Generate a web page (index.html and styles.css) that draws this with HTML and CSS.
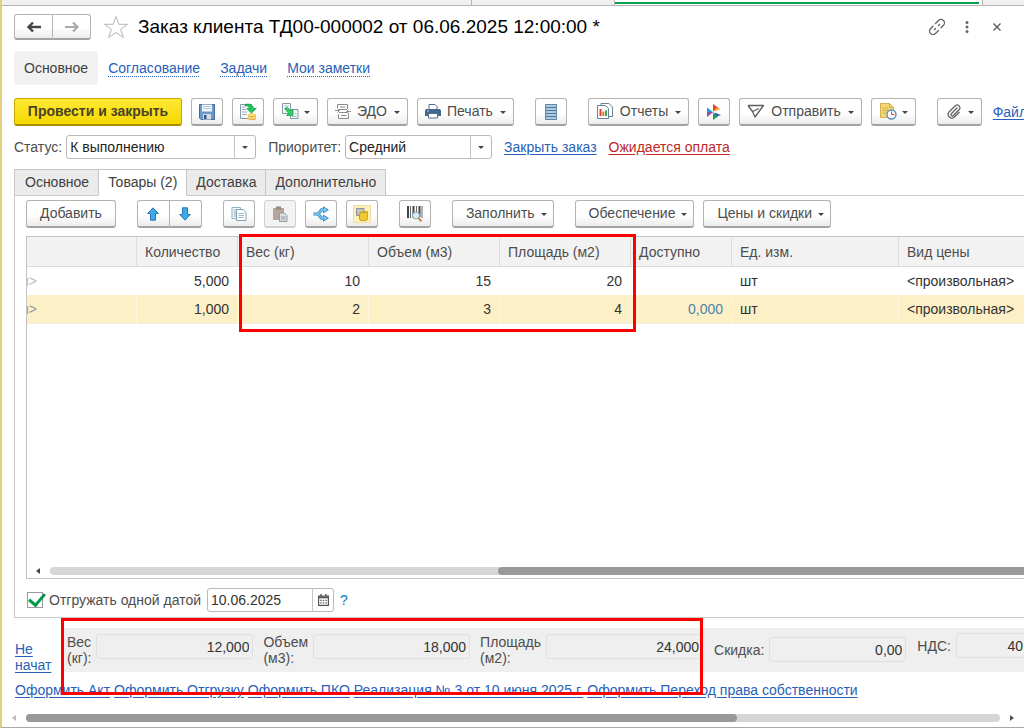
FILE: index.html
```html
<!DOCTYPE html>
<html lang="ru">
<head>
    <meta charset="UTF-8">
    <meta name="viewport" content="width=device-width, initial-scale=1.0">
    <title>Заказ клиента ТД00-000002</title>
    <link rel="stylesheet" href="styles.css">
</head>
<body>
<div class="window-tabs">
    <div class="window-tab"></div>
    <div class="window-tab"></div>
    <div class="window-tab active"></div>
    <div class="window-tab"></div>
</div>

<header class="header">
    <div class="btn-pair history">
        <button type="button" class="btn" aria-label="Назад">
            <svg width="16" height="12" viewBox="0 0 16 12"><path d="M15 6H3M7 1.5L2.500 6L7 10.500" fill="none" stroke="#444" stroke-width="2.400"/></svg>
        </button>
        <button type="button" class="btn" aria-label="Вперед">
            <svg width="16" height="12" viewBox="0 0 16 12"><path d="M1 6H13M9 1.500L13.500 6L9 10.500" fill="none" stroke="#aaa" stroke-width="2.200"/></svg>
        </button>
    </div>
    <svg class="star" width="26" height="24" viewBox="0 0 26 24"><path d="M13 1.500L15.800 9.300H24.500L17.600 14.300L20.300 22.500L13 17.500L5.700 22.500L8.400 14.300L1.500 9.300H10.200Z" fill="#fff" stroke="#b3b6bb"/></svg>
    <h1>Заказ клиента ТД00-000002 от 06.06.2025 12:00:00 *</h1>
    <div class="header-tools">
        <svg width="18" height="18" viewBox="0 0 18 18"><g fill="none" stroke="#6a6a6a" stroke-width="1.400" stroke-linecap="round"><path d="M7.500 5.500L10.500 2.500A3.300 3.300 0 0 1 15.500 7.300L13 9.800"/><path d="M10.500 12.500L7.500 15.500A3.300 3.300 0 0 1 2.500 10.700L5 8.200"/><path d="M6.500 11.500L7.500 10.500M10.500 7.500L11.500 6.500"/></g></svg>
        <svg width="18" height="14" viewBox="0 0 18 14"><g fill="#666"><circle cx="9" cy="2.500" r="1.500"/><circle cx="9" cy="7" r="1.500"/><circle cx="9" cy="11.500" r="1.500"/></g></svg>
        <svg width="18" height="8" viewBox="0 0 18 8"><path d="M5.500.5L12.500 7.500M12.500.5L5.500 7.500" stroke="#555" stroke-width="1.300"/></svg>
    </div>
</header>

<nav class="sections">
    <a href="#" class="current">Основное</a>
    <a href="#">Согласование</a>
    <a href="#">Задачи</a>
    <a href="#">Мои заметки</a>
</nav>

<div class="toolbar main-toolbar">
    <button type="button" class="btn primary">Провести и закрыть</button>
    <button type="button" class="btn icon-btn" aria-label="Записать">
        <svg width="16" height="16" viewBox="0 0 16 16"><path d="M.5.5H15.500V15.500H2L.5 14Z" fill="#6b98cb" stroke="#41699b"/><path d="M3 .5H13V7.500H3Z" fill="#f2f6fa"/><path d="M4 2.500H12M4 4.500H12" stroke="#b9c8d8"/><path d="M4 10H12V15.500H4Z" fill="#d5dbe2"/><path d="M5 11H7.500V15H5Z" fill="#33557f"/></svg>
    </button>
    <button type="button" class="btn icon-btn" aria-label="Провести">
        <svg width="18" height="18" viewBox="0 0 18 18"><path d="M1.500 1.500H12.500V15.500H1.500Z" fill="#f5f8fa" stroke="#8499a8"/><path d="M3 4H6M3 6.500H7M3 9H8M3 11.500H8" stroke="#9fb0bb"/><path d="M9 11.500V15.500A4 1.700 0 0 0 17 15.500V11.500Z" fill="#e6b63a"/><ellipse cx="13" cy="11.500" rx="4" ry="1.600" fill="#f8dc7c"/><path d="M9 13.500A4 1.600 0 0 0 17 13.500" fill="none" stroke="#fff0b5"/><path d="M6 1.500C11 .3 14 2 14.500 5.500H17.300L12.500 10L7.800 5.500H10.500C10 3.500 8.500 2.500 6 2.800Z" fill="#23c35b" stroke="#13934a" stroke-width=".7"/></svg>
    </button>
    <button type="button" class="btn menu-btn menu-icon" aria-label="Создать на основании">
        <svg width="18" height="18" viewBox="0 0 18 18"><path d="M1.500 1.500H9.500V11.500H1.500Z" fill="#f7fafb" stroke="#8499a8"/><path d="M3 4H8M3 6.500H8" stroke="#a8b7c0"/><path d="M9.500 7.500H17V16.500H9.500Z" fill="#f7fafb" stroke="#8499a8"/><path d="M13.500 12H15.500M11 14.500H15.500" stroke="#a8b7c0"/><path d="M4.500 6L6.500 5.500L10 9L12 7V13.500H5.500L7.800 11.200L4.500 8Z" fill="#2fd06a" stroke="#13934a" stroke-width=".7"/></svg>
        <span class="caret"></span>
    </button>
    <button type="button" class="btn menu-btn">
        <svg width="16" height="18" viewBox="0 0 16 18"><g fill="none" stroke="#8d8d8d"><path d="M2.500 6V2.500H12.500V7M3.500 12V16.500H13.500V11"/><path d="M5 5H10.500M4 7.500H12M4 10.500H12M6 13.500H11.500"/><path d="M0 8.500H4M2.500 6.500L4.500 8.500L2.500 10.500M16 9.500H12M13.500 7.500L11.500 9.500L13.500 11.500"/></g></svg>
        ЭДО<span class="caret"></span>
    </button>
    <button type="button" class="btn menu-btn">
        <svg width="16" height="16" viewBox="0 0 16 16"><path d="M4 1.500H10L12 3.500V7H4Z" fill="#fff" stroke="#53718c"/><path d="M1 6H15L16 7.500V13H0V7.500Z" fill="#3f698f"/><path d="M3.500 10.500H12.500V15H3.500Z" fill="#fff" stroke="#53718c"/><path d="M2 8H4" stroke="#bcd6e8"/></svg>
        Печать<span class="caret"></span>
    </button>
    <button type="button" class="btn icon-btn group-start" aria-label="Список">
        <svg width="12" height="16" viewBox="0 0 12 16"><path d="M.5.5H11.500V15.500H.5Z" fill="#a8c9e0" stroke="#5d87a6"/><path d="M1 3.500H11M1 6.500H11M1 9.500H11M1 12.500H11" stroke="#4f7ea1"/></svg>
    </button>
    <button type="button" class="btn menu-btn group-start">
        <svg width="18" height="18" viewBox="0 0 18 18"><path d="M5 3V1.500H13L16.500 5V14.500H13" fill="#fff" stroke="#688298"/><path d="M1.500 3.500H9.500L12.500 6.500V16.500H1.500Z" fill="#fff" stroke="#688298"/><path d="M4.500 14V7" stroke="#d9402f" stroke-width="2"/><path d="M7.300 14V9.500" stroke="#dd7a35" stroke-width="2"/><path d="M10 14V8.500" stroke="#37a653" stroke-width="2"/></svg>
        Отчеты<span class="caret"></span>
    </button>
    <button type="button" class="btn icon-btn" aria-label="Сервис">
        <svg width="16" height="18" viewBox="0 0 16 18"><path d="M7 1L12 4.500L7 8.500Z" fill="#ee3d2b"/><path d="M8 8.500L10.500 4.500L15 6Z" fill="#f7a325"/><path d="M1 4.500L7 9L1 9Z" fill="#1d9fd8"/><path d="M1 9H7.500L1 14Z" fill="#8d51a5"/><path d="M7 9.500L12 13.500L7 17Z" fill="#25a056"/><path d="M8 9.500L15 12L10.500 13.500Z" fill="#1a5fa8"/></svg>
    </button>
    <button type="button" class="btn menu-btn">
        <svg width="18" height="16" viewBox="0 0 18 16"><path d="M1 2.500H16.500L8 14L5.500 8.500L1 2.500M5.500 8.500L12 5.500" fill="none" stroke="#5c5c5c" stroke-width="1.300" stroke-linejoin="round"/></svg>
        Отправить<span class="caret"></span>
    </button>
    <button type="button" class="btn menu-btn menu-icon" aria-label="Напоминания">
        <svg width="18" height="18" viewBox="0 0 18 18"><path d="M1.500 1.500H10.500L14.500 5.500V15.500H1.500Z" fill="#f3d676" stroke="#d3b050"/><path d="M10.500 1.500V5.500H14.500M3.500 6H9M3.500 8.500H9M3.500 11H7" fill="none" stroke="#d3b050"/><circle cx="12.500" cy="12.500" r="4.500" fill="#fff" stroke="#5b8fbc" stroke-width="1.400"/><path d="M12.500 9.500V12.500H15.500" fill="none" stroke="#d44"/></svg>
        <span class="caret"></span>
    </button>
    <button type="button" class="btn menu-btn menu-icon group-start" aria-label="Присоединенные файлы">
        <svg width="18" height="16" viewBox="0 0 18 16"><path d="M12.500 4.500L6.500 10.500A1.400 1.400 0 0 0 8.500 12.500L14.300 6.500A2.800 2.800 0 0 0 10.500 2.500L4 9A3.700 3.700 0 0 0 9.200 14.200L14.500 9" fill="none" stroke="#666" stroke-width="1.300"/></svg>
        <span class="caret"></span>
    </button>
    <a href="#" class="files-link">Файл</a>
</div>

<div class="status-row">
    <label for="status">Статус:</label>
    <div class="combo combo-status">
        <select id="status"><option>К выполнению</option></select>
    </div>
    <label for="priority">Приоритет:</label>
    <div class="combo combo-priority">
        <select id="priority"><option>Средний</option></select>
    </div>
    <a href="#">Закрыть заказ</a>
    <a href="#" class="warning-link">Ожидается оплата</a>
</div>

<div class="tabs" role="tablist">
    <button type="button" class="tab" role="tab">Основное</button>
    <button type="button" class="tab active" role="tab" aria-selected="true">Товары (2)</button>
    <button type="button" class="tab" role="tab">Доставка</button>
    <button type="button" class="tab" role="tab">Дополнительно</button>
</div>

<main class="panel">
    <div class="toolbar">
        <button type="button" class="btn text-btn">Добавить</button>
        <div class="btn-pair group-start">
            <button type="button" class="btn" aria-label="Переместить вверх">
                <svg width="12" height="14" viewBox="0 0 12 14"><path d="M6 .8L11.300 6.500H8.500V13.200H3.500V6.500H.7Z" fill="#3fa9ea" stroke="#2478b3"/></svg>
            </button>
            <button type="button" class="btn" aria-label="Переместить вниз">
                <svg width="12" height="14" viewBox="0 0 12 14"><path d="M6 13.200L11.300 7.500H8.500V.8H3.500V7.500H.7Z" fill="#3fa9ea" stroke="#2478b3"/></svg>
            </button>
        </div>
        <button type="button" class="btn icon-btn group-start" aria-label="Скопировать">
            <svg width="16" height="16" viewBox="0 0 16 16"><path d="M1 1.500H9.500V12.500H1Z" fill="#f4f9fc" stroke="#8fb0c4"/><path d="M2.500 4H5M2.500 6H5M2.500 8H5M2.500 10H5" stroke="#8fb0c4"/><path d="M5.500 3.500H12L15 6.500V14.500H5.500Z" fill="#fff" stroke="#7fa3b9"/><path d="M7.500 7.500H13M7.500 9.500H13M7.500 11.500H13" stroke="#9dbccd"/></svg>
        </button>
        <button type="button" class="btn icon-btn" aria-label="Вставить" disabled>
            <svg width="16" height="16" viewBox="0 0 16 16"><path d="M1 2H12V14H1Z" fill="#b7a49b"/><path d="M4 .5H9V3.500H4Z" fill="#8e8782"/><path d="M7.500 7H12.500L15 9.500V15.500H7.500Z" fill="#d9dee2" stroke="#929ba3"/><path d="M9 11H13.500M9 13H13.500" stroke="#929ba3"/></svg>
        </button>
        <button type="button" class="btn icon-btn" aria-label="Разбить строку">
            <svg width="16" height="16" viewBox="0 0 16 16"><path d="M.5 8H5L8.500 3.800H11.500M5 8L8.500 12.200H11.500" fill="none" stroke="#2f88bd" stroke-width="3"/><path d="M10.500 .8L15.300 3.800L10.500 6.800ZM10.500 9.200L15.300 12.200L10.500 15.200Z" fill="#7cc8f2" stroke="#2f88bd" stroke-width=".9"/><path d="M1 8H5L8.500 3.800H12M5 8L8.500 12.200H12" fill="none" stroke="#7cc8f2" stroke-width="1.400"/></svg>
        </button>
        <button type="button" class="btn icon-btn" aria-label="Подбор">
            <svg width="18" height="18" viewBox="0 0 18 18"><path d="M.5.5H17.500V17.500H.5Z" fill="#fff0ba" stroke="#f2dda0"/><path d="M3.500 3.500H11V10.500H3.500Z" fill="#bfc4c7" stroke="#8b9196"/><rect x="6.500" y="7.500" width="8" height="8" rx="2" fill="#f4c92d" stroke="#c29a1c"/><path d="M7 10V8.500L9 6.500H14.500V13" fill="none" stroke="#d6ab20"/></svg>
        </button>
        <button type="button" class="btn icon-btn group-start" aria-label="Поиск по штрихкоду">
            <svg width="16" height="16" viewBox="0 0 16 16"><path d="M1 0V12M6.500 0V12M12.500 0V11" stroke="#444" stroke-width="2"/><path d="M3.500 0V12M9.500 0V12M15 0V12" stroke="#666"/><circle cx="9" cy="9.500" r="3.500" fill="#dcecf7" stroke="#8aa7bb"/><path d="M11.500 12L14.500 15.500" stroke="#c58a5a" stroke-width="2"/></svg>
        </button>
        <button type="button" class="btn text-btn group-start">Заполнить<span class="caret"></span></button>
        <button type="button" class="btn text-btn group-start">Обеспечение<span class="caret"></span></button>
        <button type="button" class="btn text-btn">Цены и скидки<span class="caret"></span></button>
    </div>

    <div class="grid">
        <div class="grid-view">
            <table>
                <colgroup>
                    <col class="col-name">
                    <col class="col-qty">
                    <col class="col-measure">
                    <col class="col-measure">
                    <col class="col-measure">
                    <col class="col-available">
                    <col class="col-unit">
                    <col>
                </colgroup>
                <thead>
                    <tr>
                        <th></th>
                        <th>Количество</th>
                        <th>Вес (кг)</th>
                        <th>Объем (м3)</th>
                        <th>Площадь (м2)</th>
                        <th>Доступно</th>
                        <th>Ед. изм.</th>
                        <th>Вид цены</th>
                    </tr>
                </thead>
                <tbody>
                    <tr>
                        <td class="cut"><span>и&gt;</span></td>
                        <td class="num">5,000</td>
                        <td class="num">10</td>
                        <td class="num">15</td>
                        <td class="num">20</td>
                        <td class="num"></td>
                        <td>шт</td>
                        <td>&lt;произвольная&gt;</td>
                    </tr>
                    <tr class="selected">
                        <td class="cut"><span>и&gt;</span></td>
                        <td class="num">1,000</td>
                        <td class="num">2</td>
                        <td class="num">3</td>
                        <td class="num">4</td>
                        <td class="num available">0,000</td>
                        <td>шт</td>
                        <td>&lt;произвольная&gt;</td>
                    </tr>
                </tbody>
            </table>
        </div>
        <div class="scrollbar grid-scroll">
            <span class="arrow-left"></span>
            <div class="track"><div class="thumb"></div></div>
        </div>
        <div class="highlight"></div>
    </div>

    <div class="ship-row">
        <input type="checkbox" id="ship-once" checked>
        <label for="ship-once">Отгружать одной датой</label>
        <div class="date-field">
            <input type="text" value="10.06.2025" aria-label="Дата отгрузки">
            <button type="button" aria-label="Календарь">
                <svg width="11" height="12" viewBox="0 0 11 12"><path d="M.6 2H10.400V11.400H.6Z" fill="none" stroke="#555" stroke-width="1.200"/><path d="M.5 3.300H10.500" stroke="#555" stroke-width="2"/><path d="M3 0V2M8 0V2" stroke="#555" stroke-width="1.400"/><path d="M2.200 6.300H9M2.200 8.800H9" stroke="#555" stroke-width="1.300" stroke-dasharray="1.400 1.200"/></svg>
            </button>
        </div>
        <a href="#" class="help">?</a>
    </div>
</main>

<div class="summary">
    <a href="#" class="state">Не начат</a>
    <div class="totals">
        <div class="measures">
            <label for="total-weight">Вес<br>(кг):</label>
            <input id="total-weight" value="12,000" readonly>
            <label for="total-volume">Объем<br>(м3):</label>
            <input id="total-volume" value="18,000" readonly>
            <label for="total-area">Площадь<br>(м2):</label>
            <input id="total-area" value="24,000" readonly>
        </div>
        <div class="amount discount">
            <label for="discount">Скидка:</label>
            <input id="discount" value="0,00" readonly>
        </div>
        <div class="amount vat">
            <label for="vat">НДС:</label>
            <input id="vat" value="40" readonly>
        </div>
    </div>
</div>

<div class="actions">
    <a href="#">Оформить Акт</a>
    <a href="#">Оформить Отгрузку</a>
    <a href="#">Оформить ПКО</a>
    <a href="#">Реализация № 3 от 10 июня 2025 г.</a>
    <a href="#">Оформить Переход права собственности</a>
</div>

<div class="scrollbar page-scroll">
    <span class="arrow-left"></span>
    <div class="track"><div class="thumb"></div></div>
    <span class="arrow-right"></span>
</div>
</body>
</html>
```

FILE: styles.css
```css
* { box-sizing: border-box; }
body {
    margin: 0; min-height: 100vh; display: flex; flex-direction: column; overflow: hidden;
    font-family: "Liberation Sans", Arial, sans-serif; font-size: 14px; line-height: 16px; color: #4d4d4d;
    background: #fff; border-left: 2px solid #e3cf7f; border-bottom: 1px solid #a8a8a8;
}
button, input, select { font: inherit; color: inherit; margin: 0; }
a { color: #2860b8; text-underline-offset: 2px; white-space: nowrap; }
svg { display: block; flex: none; }

/* Strip of open windows */
.window-tabs { display: grid; grid-template-columns: 46% 14% 36% 1fr; height: 6px; background: #f0f0f0; border-bottom: 1px solid #b4b4b4; }
.window-tab { border-right: 1px solid #b4b4b4; }
.window-tab.active { background: #fff; padding: 2px 3px 0 0; }
.window-tab.active::before { content: ""; display: block; height: 2px; background: #0a9f4f; }
.window-tab:last-child { border-right: none; }

/* Title */
.header { display: flex; align-items: center; height: 26px; margin: 8px 18px 0 12px; }
h1 { margin: 0 0 0 9px; font-size: 19px; line-height: 24px; font-weight: normal; color: #000; white-space: nowrap; }
.star { margin-left: 12px; }
.header-tools { display: flex; align-items: center; gap: 12px; margin-left: auto; }

/* Section links */
.sections { display: flex; align-items: center; gap: 20px; height: 34px; margin: 11px 12px 0; }
.sections a { text-decoration: underline dotted 1px; text-underline-offset: 3px; }
.sections .current { padding: 9px 10px; margin-right: -10px; background: #f1f1f1; border-radius: 4px; color: #404040; text-decoration: none; }

/* Buttons */
.btn {
    display: flex; align-items: center; justify-content: center; height: 28px; padding: 0 7px 1px; flex: none;
    border: 1px solid #b3b3b3; border-bottom: 2px solid #a3a3a3; border-radius: 3px;
    background: linear-gradient(#fff 55%, #ececec); white-space: nowrap;
}
.btn:disabled { border-color: #d0d0d0; background: #f3f3f3; }
.primary { width: 168px; border-color: #c5a800; border-bottom-color: #a98f00; background: linear-gradient(#ffe936, #f5d800); font-weight: bold; color: #4a4324; }
.icon-btn { width: 32px; padding: 0; }
.menu-btn { gap: 7px; }
.menu-btn svg { margin-right: -1px; }
.menu-icon { gap: 6px; }
.text-btn { gap: 6px; padding: 0 6px 1px 13px; }
.text-btn:first-child { padding-right: 13px; }
.caret { border: 3px solid transparent; border-top-color: #444; border-bottom: none; margin-top: 3px; }
.btn-pair { display: flex; flex: none; }
.btn-pair .btn { width: 33px; padding: 0; }
.btn-pair .btn:first-child { border-radius: 3px 0 0 3px; }
.btn-pair .btn:last-child { border-radius: 0 3px 3px 0; margin-left: -1px; }
.history .btn { width: 39px; height: 26px; }
.toolbar { display: flex; align-items: center; gap: 9px; }
.group-start { margin-left: 12px; }
.main-toolbar { margin: 13px 0 0 12px; }
.files-link { margin-left: 2px; }

/* Status row */
.status-row { display: flex; align-items: center; gap: 12px; height: 24px; margin: 9px 12px 0; }
.status-row label { margin-right: -8px; }
.warning-link { color: #c02828; }
.combo { position: relative; }
.combo select {
    width: 100%; height: 24px; display: block; appearance: none; padding: 0 24px 0 3px;
    border: 1px solid #b9b9b9; border-radius: 3px; background: #fff; color: #222;
}
.combo::before { content: ""; position: absolute; top: 1px; bottom: 1px; right: 21px; border-left: 1px solid #c4c4c4; }
.combo::after { content: ""; position: absolute; top: 11px; right: 8px; border: 3px solid transparent; border-top-color: #444; border-bottom: none; }
.combo-status { width: 190px; }
.combo-priority { width: 147px; }

/* Tabs */
.tabs { display: flex; height: 27px; margin: 10px 12px 0; }
.tab { padding: 0 9px 2px; border: 1px solid #c6c6c6; margin-right: -1px; background: #ebebeb; color: #404040; white-space: nowrap; }
.tab:first-child { padding-left: 10px; }
.tab.active { position: relative; border-bottom-color: #fff; background: #fff; }

.panel { flex: 1; display: flex; flex-direction: column; margin: -1px 0 0 12px; padding: 4px 0 5px 11px; border: 1px solid #c9c9c9; border-right: none; }

/* Goods table */
.grid { position: relative; flex: 1; display: flex; flex-direction: column; margin-top: 8px; border: 1px solid #c4c4c4; border-right: none; }
.grid-view { flex: 1; overflow: hidden; }
table { width: 100%; min-width: 998px; table-layout: fixed; border-collapse: separate; border-spacing: 0; }
.col-name { width: 110px; }
.col-qty { width: 101px; }
.col-measure { width: 131px; }
.col-available { width: 101px; }
.col-unit { width: 167px; }
th, td { padding: 0 8px; text-align: left; white-space: nowrap; overflow: hidden; }
th { height: 30px; background: #f2f2f2; border-right: 1px solid #dcdcdc; border-bottom: 1px solid #dcdcdc; font-weight: normal; }
td { height: 28px; border-right: 1px solid #fff; color: #333; }
.selected td { height: 29px; background: #fdf0c6; border-bottom: 1px solid #f3ecd6; border-right-color: #fff8e0; }
td.num { text-align: right; }
td.cut { padding: 0; color: #bbb; }
td.cut span { display: flex; justify-content: flex-end; width: 10px; overflow: hidden; }
.selected td.cut { color: #999; }
td.available { color: #4a83ad; }
.highlight { position: absolute; top: -3px; left: 212px; width: 397px; height: 98px; border: 3px solid #f00; pointer-events: none; }

/* Scroll bars */
.scrollbar { display: flex; align-items: center; }
.track { flex: 1; height: 8px; border-radius: 4px; background: #d6d6d6; }
.thumb { height: 8px; border-radius: 4px; background: #999; }
.arrow-left { border: 3px solid transparent; border-right: 4px solid #444; border-left: none; }
.arrow-right { border: 3px solid transparent; border-left: 4px solid #555; border-right: none; }
.grid-scroll { height: 14px; gap: 10px; padding-left: 9px; }
.grid-scroll .track { border-radius: 4px 0 0 4px; }
.grid-scroll .thumb { width: 54%; margin-left: auto; border-radius: 4px 0 0 4px; }
.page-scroll { height: 8px; gap: 10px; margin: 16px 10px 5px; }
.page-scroll .thumb { width: 73%; }
.page-scroll .arrow-left { border-right-color: #bbb; }

/* Shipping date */
.ship-row { display: flex; align-items: center; height: 24px; margin-top: 9px; }
.ship-row input[type="checkbox"] { position: relative; appearance: none; width: 16px; height: 16px; margin: 0 6px 0 1px; border: 1px solid #999; background: #fff; }
.ship-row input[type="checkbox"]:checked::after {
    content: ""; position: absolute; left: 4px; top: -3px; width: 7px; height: 13px;
    border: solid #009a48; border-width: 0 3px 3px 0; transform: rotate(40deg);
}
.date-field { display: flex; width: 127px; height: 24px; margin: 0 6px; border: 1px solid #b9b9b9; border-radius: 3px; }
.date-field input { flex: 1; min-width: 0; padding: 0 3px; border: none; background: none; color: #333; }
.date-field button { width: 21px; display: flex; align-items: center; justify-content: center; padding: 0; border: none; border-left: 1px solid #c4c4c4; background: none; }
.help { color: #0a7cc4; text-decoration: none; }

/* Totals */
.summary { display: flex; margin: 10px 0 0 13px; }
.state { width: 46px; flex: none; padding-top: 13px; white-space: normal; }
.totals { flex: 1; min-width: 0; display: flex; height: 44px; background: #efefef; }
.totals input { width: 157px; height: 25px; padding: 0 3px; border: 1px solid #e0e0e0; border-radius: 3px; background: none; color: #333; text-align: right; }
.measures { position: relative; display: flex; align-items: flex-start; padding: 6px 0 0 6px; flex: none; }
.measures label { margin-right: 5px; }
.measures input + label { margin-left: 10px; }
.measures::after { content: ""; position: absolute; inset: -10px 0 -23px; border: 3px solid #f00; pointer-events: none; }
.amount { display: flex; align-items: center; align-self: flex-start; gap: 5px; margin: 5px 0 0 11px; flex: none; }
.amount.discount { margin-top: 9px; }
.amount.discount input { width: 137px; }
.amount.vat { flex: 1; min-width: 0; }
.amount.vat input { flex: 1; min-width: 0; padding-right: 1px; border-right: none; border-radius: 3px 0 0 3px; }

.actions { display: flex; gap: 4px; margin: 9px 12px 0 13px; }
```
